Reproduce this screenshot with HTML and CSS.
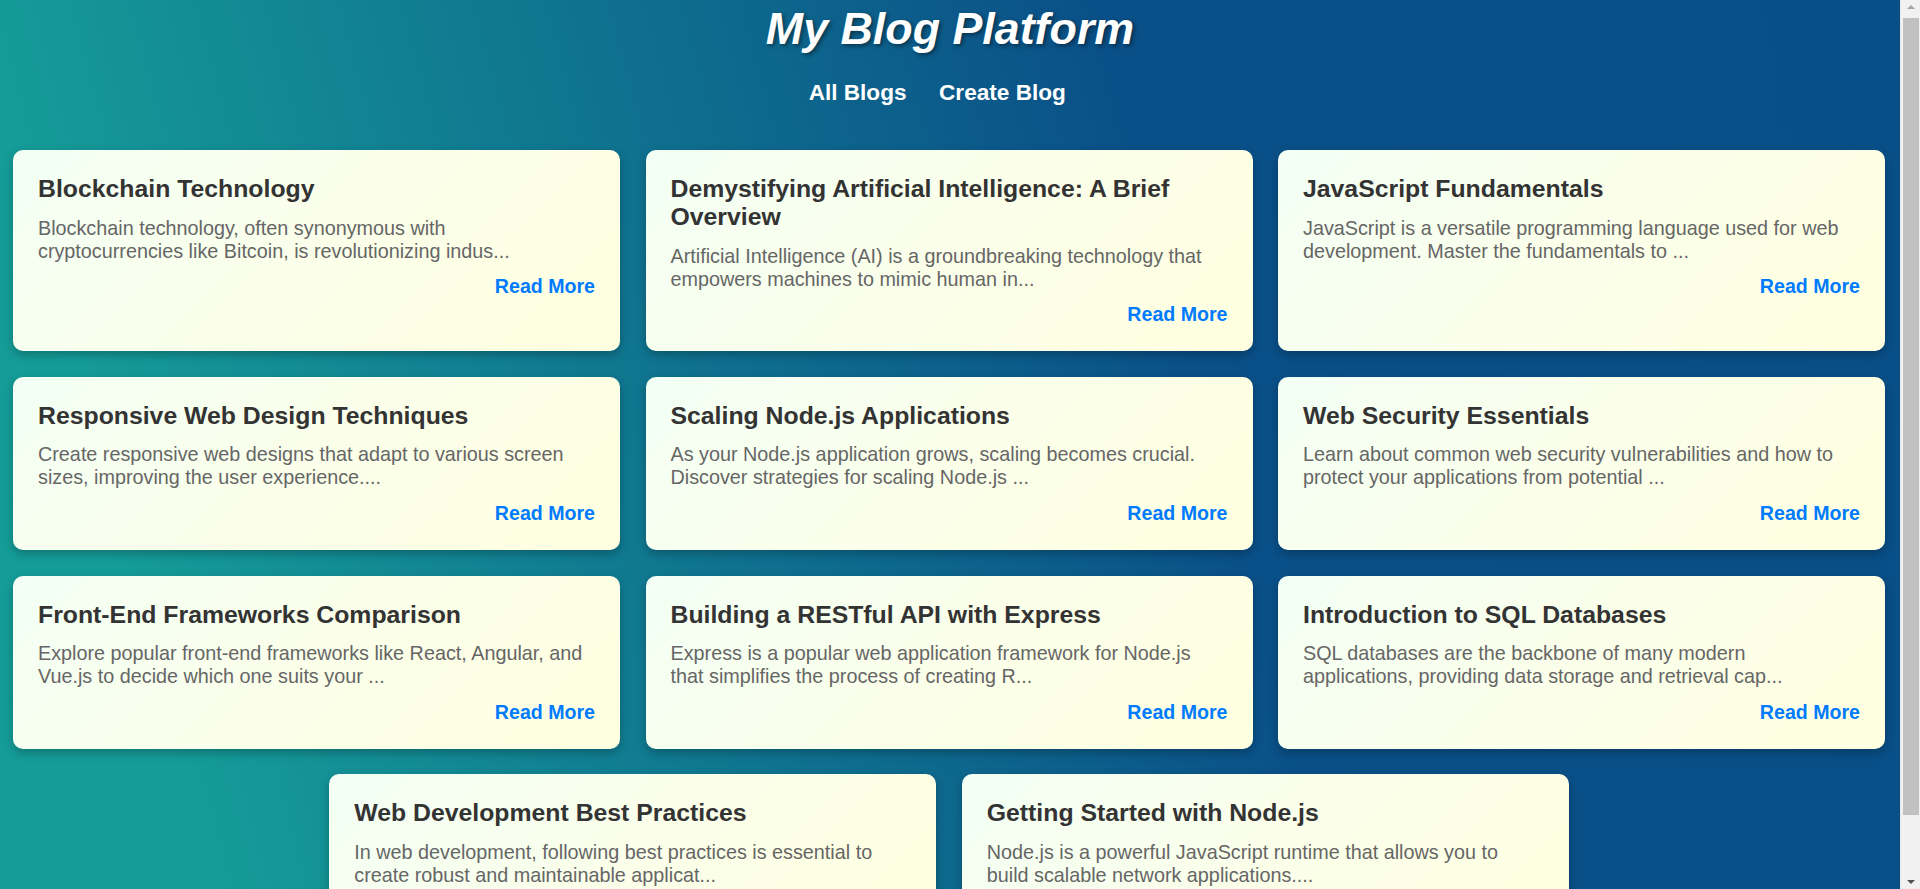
FILE: index.html
```html
<!DOCTYPE html>
<html lang="en">
<head>
<meta charset="utf-8">
<title>My Blog Platform</title>
<link rel="stylesheet" href="styles.css">
</head>
<body>
<header class="site-header">
  <h1 class="site-title">My Blog Platform</h1>
  <nav class="site-nav">
    <a href="#" class="nav-link">All Blogs</a>
    <a href="#" class="nav-link">Create Blog</a>
  </nav>
</header>
<main class="blog-list">
  <article class="blog-card">
    <h2 class="blog-title">Blockchain Technology</h2>
    <p class="blog-desc">Blockchain technology, often synonymous with cryptocurrencies like Bitcoin, is revolutionizing indus...</p>
    <a href="#" class="read-more">Read More</a>
  </article>
  <article class="blog-card">
    <h2 class="blog-title">Demystifying Artificial Intelligence: A Brief Overview</h2>
    <p class="blog-desc">Artificial Intelligence (AI) is a groundbreaking technology that empowers machines to mimic human in...</p>
    <a href="#" class="read-more">Read More</a>
  </article>
  <article class="blog-card">
    <h2 class="blog-title">JavaScript Fundamentals</h2>
    <p class="blog-desc">JavaScript is a versatile programming language used for web development. Master the fundamentals to ...</p>
    <a href="#" class="read-more">Read More</a>
  </article>
  <article class="blog-card">
    <h2 class="blog-title">Responsive Web Design Techniques</h2>
    <p class="blog-desc">Create responsive web designs that adapt to various screen sizes, improving the user experience....</p>
    <a href="#" class="read-more">Read More</a>
  </article>
  <article class="blog-card">
    <h2 class="blog-title">Scaling Node.js Applications</h2>
    <p class="blog-desc">As your Node.js application grows, scaling becomes crucial. Discover strategies for scaling Node.js ...</p>
    <a href="#" class="read-more">Read More</a>
  </article>
  <article class="blog-card">
    <h2 class="blog-title">Web Security Essentials</h2>
    <p class="blog-desc">Learn about common web security vulnerabilities and how to protect your applications from potential ...</p>
    <a href="#" class="read-more">Read More</a>
  </article>
  <article class="blog-card">
    <h2 class="blog-title">Front-End Frameworks Comparison</h2>
    <p class="blog-desc">Explore popular front-end frameworks like React, Angular, and Vue.js to decide which one suits your ...</p>
    <a href="#" class="read-more">Read More</a>
  </article>
  <article class="blog-card">
    <h2 class="blog-title">Building a RESTful API with Express</h2>
    <p class="blog-desc">Express is a popular web application framework for Node.js that simplifies the process of creating R...</p>
    <a href="#" class="read-more">Read More</a>
  </article>
  <article class="blog-card">
    <h2 class="blog-title">Introduction to SQL Databases</h2>
    <p class="blog-desc">SQL databases are the backbone of many modern applications, providing data storage and retrieval cap...</p>
    <a href="#" class="read-more">Read More</a>
  </article>
  <article class="blog-card">
    <h2 class="blog-title">Web Development Best Practices</h2>
    <p class="blog-desc">In web development, following best practices is essential to create robust and maintainable applicat...</p>
    <a href="#" class="read-more">Read More</a>
  </article>
  <article class="blog-card">
    <h2 class="blog-title">Getting Started with Node.js</h2>
    <p class="blog-desc">Node.js is a powerful JavaScript runtime that allows you to build scalable network applications....</p>
    <a href="#" class="read-more">Read More</a>
  </article>
</main>
<div class="fake-scrollbar" aria-hidden="true">
  <span class="sb-arrow sb-up"></span>
  <span class="sb-thumb"></span>
  <span class="sb-arrow sb-down"></span>
</div>
</body>
</html>
```

FILE: styles.css
```css
html, body {
  margin: 0;
  padding: 0;
}

body {
  font-family: "Liberation Sans", Arial, sans-serif;
  background: linear-gradient(75deg, #159c98 10%, #0a5088 62%, #094f87 100%);
  color: #333;
  padding-right: 20px;
}

.site-header {
  text-align: center;
  padding-top: 3px;
}

.site-title {
  margin: 0;
  font-size: 44.8px;
  font-weight: bold;
  font-style: italic;
  color: #fff;
  text-shadow: 2px 2px 4px rgba(0, 0, 0, 0.45);
}

.site-nav {
  margin-top: 26px;
  display: flex;
  justify-content: center;
}

.nav-link {
  color: #fff;
  text-decoration: none;
  font-weight: bold;
  font-size: 22.6px;
  margin: 0 29px 0 3.5px;
}

.blog-list {
  width: 1872px;
  margin: 44px 0 0 13px;
  padding-bottom: 10px;
  display: flex;
  flex-wrap: wrap;
  justify-content: center;
  gap: 25.8px 25.5px;
}

.blog-card {
  box-sizing: border-box;
  width: 607px;
  padding: 25px;
  border-radius: 10px;
  background: linear-gradient(135deg, #f3fff5 0%, #fbffea 50%, #ffffe0 100%);
  box-shadow: 0 4px 10px rgba(0, 0, 0, 0.25);
  display: flex;
  flex-direction: column;
}

.blog-title {
  margin: 0 0 13.5px;
  font-size: 24.8px;
  font-weight: bold;
  color: #333;
}

.blog-desc {
  margin: 0 0 12.5px;
  font-size: 19.8px;
  color: #666;
}

.read-more {
  align-self: flex-end;
  color: #007bff;
  font-weight: bold;
  font-size: 19.6px;
  text-decoration: none;
}

.fake-scrollbar {
  position: fixed;
  top: 0;
  right: 0;
  width: 20px;
  height: 100vh;
  background: #f1f1f1;
  border-left: 1px solid #e8e8e8;
  box-sizing: border-box;
}

.sb-thumb {
  position: absolute;
  top: 18px;
  left: 2px;
  right: 1px;
  height: 797px;
  background: #c1c1c1;
}

.sb-arrow {
  position: absolute;
  left: 50%;
  width: 0;
  height: 0;
  margin-left: -4px;
  border-left: 4px solid transparent;
  border-right: 4px solid transparent;
}

.sb-up {
  top: 5px;
  border-bottom: 4px solid #a3a3a3;
}

.sb-down {
  bottom: 5px;
  border-top: 4px solid #505050;
}
```
